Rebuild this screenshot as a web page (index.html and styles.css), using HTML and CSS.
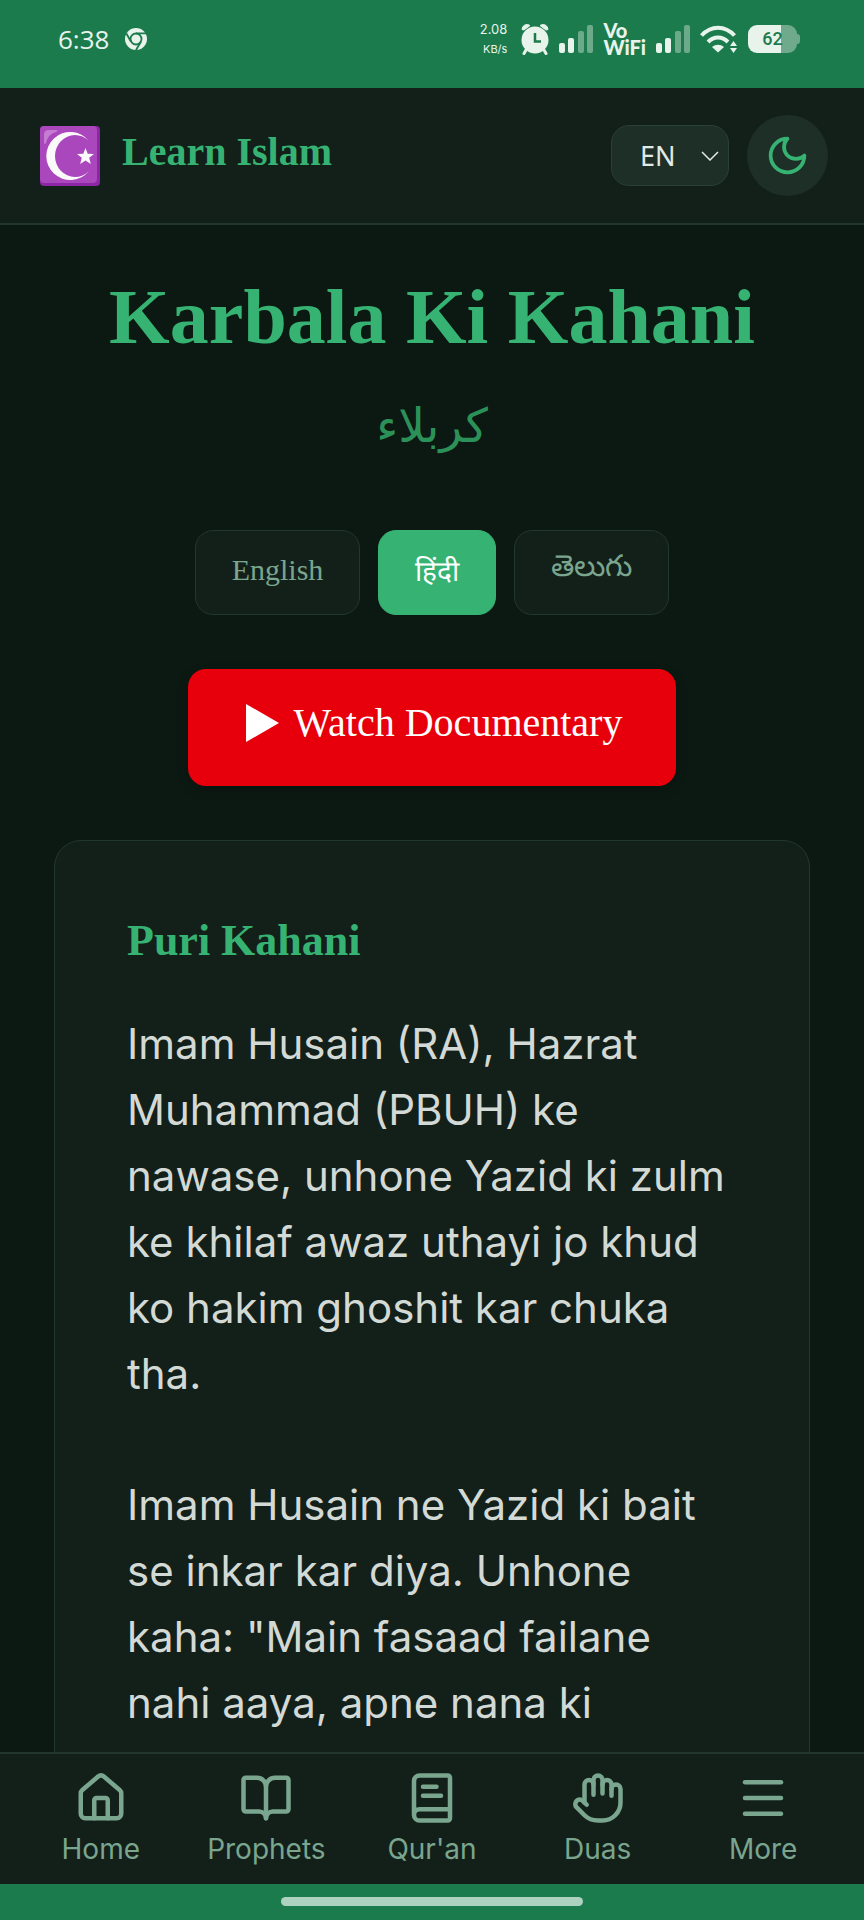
FILE: index.html
```html
<!DOCTYPE html>
<html lang="en">
  <head>
    <meta charset="utf-8" />
    <meta name="viewport" content="width=device-width, initial-scale=1" />
    <title>Karbala Ki Kahani - Learn Islam</title>
    <link rel="stylesheet" href="styles.css" />
  </head>
  <body>
    <div class="status-bar">
      <span class="status-time">6:38</span>
      <svg class="status-chrome" viewBox="0 0 24 24">
        <circle cx="12" cy="12" r="12" fill="#e8f3ec" />
        <circle cx="12" cy="12" r="6" fill="#e8f3ec" stroke="#1c7b4c" stroke-width="2" />
        <path d="M12 5.8h11M6.600 15L1.500 6M17.400 15L12 24" stroke="#1c7b4c" stroke-width="2" />
      </svg>
      <div class="status-right">
        <div class="net-speed"><span>2.08</span><span class="net-unit">KB/s</span></div>
        <svg class="icon-alarm" viewBox="0 0 28 32">
          <g fill="#e8f3ec">
            <circle cx="14" cy="17" r="13.500" />
            <path d="M1 6.500A5 5 0 0 1 9 2.500L3 7z" stroke="#e8f3ec" stroke-linejoin="round" />
            <path d="M27 6.500A5 5 0 0 0 19 2.500L25 7z" stroke="#e8f3ec" stroke-linejoin="round" />
          </g>
          <path d="M5 27l-2 3.500M23 27l2 3.500" stroke="#e8f3ec" stroke-width="3" stroke-linecap="round" />
          <path d="M14 10v8.500h6" fill="none" stroke="#1c7b4c" stroke-width="2.500" />
        </svg>
        <svg class="icon-signal" viewBox="0 0 34 28" fill="#e8f3ec">
          <rect x="0" y="18" width="6" height="10" rx="2" />
          <rect x="9" y="13" width="6" height="15" rx="2" />
          <rect x="19" y="6" width="6" height="22" rx="2" opacity="0.4" />
          <rect x="28" y="0" width="6" height="28" rx="2" opacity="0.4" />
        </svg>
        <div class="vowifi"><span>Vo</span><span>WiFi</span></div>
        <svg class="icon-signal" viewBox="0 0 34 28" fill="#e8f3ec">
          <rect x="0" y="18" width="6" height="10" rx="2" />
          <rect x="9" y="13" width="6" height="15" rx="2" />
          <rect x="19" y="6" width="6" height="22" rx="2" opacity="0.4" />
          <rect x="28" y="0" width="6" height="28" rx="2" opacity="0.4" />
        </svg>
        <svg class="icon-wifi" viewBox="0 0 38 28">
          <g fill="none" stroke="#e8f3ec" stroke-width="4">
            <path d="M1.500 10.500C11 0 25 0 34.500 10.500" />
            <path d="M8 17c6-6 14-6 20 0" />
          </g>
          <path d="M12 22c4-3 8-3 12 0l-6 5.500z" fill="#e8f3ec" />
          <path d="M30 21l3.500-5 3.500 5zM30 23h7l-3.500 5z" fill="#e8f3ec" />
        </svg>
        <div class="battery">62</div>
      </div>
    </div>

    <header class="header">
      <a class="logo" href="#">
        <svg class="logo-icon" viewBox="0 0 60 60">
          <rect width="60" height="60" rx="4" fill="#8b26a5" />
          <rect width="57" height="57" rx="4" fill="#aa47bc" />
          <path d="M4 17V9q0-5 5-5h7q3 0 0 2Q8 8 6 17q-1 2-2 0z" fill="#c57dd2" />
          <path d="M49 15A24 24 0 1 0 49 45A20 21 0 1 1 49 15z" fill="#fafafa" />
          <path d="M45.500 22l2.200 5.700 6.300.3-4.800 3.800 1.600 6.200-5.300-3.500-5.300 3.500 1.600-6.200L37 28l6.300-.3z" fill="#fafafa" />
        </svg>
        <span class="logo-text">Learn Islam</span>
      </a>
      <div class="header-actions">
        <select class="lang-select" aria-label="Language">
          <option>EN</option>
          <option>HI</option>
          <option>TE</option>
        </select>
        <button class="theme-btn" aria-label="Toggle theme">
          <svg viewBox="0 0 24 24"><path d="M12 3a6 6 0 0 0 9 9 9 9 0 1 1-9-9Z" /></svg>
        </button>
      </div>
    </header>

    <main class="content">
      <h1 class="title">Karbala Ki Kahani</h1>
      <p class="arabic" lang="ar" dir="rtl">كربلاء</p>
      <div class="lang-btns">
        <button class="lang-btn">English</button>
        <button class="lang-btn active" lang="hi">हिंदी</button>
        <button class="lang-btn" lang="te">తెలుగు</button>
      </div>
      <a class="watch-btn" href="#">
        <svg viewBox="0 0 33 38"><path d="M0 0l33 19L0 38z" /></svg>
        <span>Watch Documentary</span>
      </a>
      <article class="card">
        <h2 class="card-title">Puri Kahani</h2>
        <p class="story">
          Imam Husain (RA), Hazrat<br />
          Muhammad (PBUH) ke<br />
          nawase, unhone Yazid ki zulm<br />
          ke khilaf awaz uthayi jo khud<br />
          ko hakim ghoshit kar chuka<br />
          tha.
        </p>
        <p class="story">
          Imam Husain ne Yazid ki bait<br />
          se inkar kar diya. Unhone<br />
          kaha: "Main fasaad failane<br />
          nahi aaya, apne nana ki
        </p>
      </article>
    </main>

    <nav class="bottom-nav">
      <a class="nav-item" href="#">
        <svg viewBox="0 0 24 24">
          <path d="M15 21v-8a1 1 0 0 0-1-1h-4a1 1 0 0 0-1 1v8" />
          <path d="M3 10a2 2 0 0 1 .709-1.528l7-5.999a2 2 0 0 1 2.582 0l7 5.999A2 2 0 0 1 21 10v9a2 2 0 0 1-2 2H5a2 2 0 0 1-2-2z" />
        </svg>
        <span>Home</span>
      </a>
      <a class="nav-item" href="#">
        <svg viewBox="0 0 24 24">
          <path d="M12 7v14" />
          <path d="M3 18a1 1 0 0 1-1-1V4a1 1 0 0 1 1-1h5a4 4 0 0 1 4 4 4 4 0 0 1 4-4h5a1 1 0 0 1 1 1v13a1 1 0 0 1-1 1h-6a3 3 0 0 0-3 3 3 3 0 0 0-3-3z" />
        </svg>
        <span>Prophets</span>
      </a>
      <a class="nav-item" href="#">
        <svg viewBox="0 0 24 24">
          <path d="M4 19.500v-15A2.500 2.500 0 0 1 6.500 2H19a1 1 0 0 1 1 1v18a1 1 0 0 1-1 1H6.500a1 1 0 0 1 0-5H20" />
          <path d="M8 11h8" />
          <path d="M8 7h6" />
        </svg>
        <span>Qur'an</span>
      </a>
      <a class="nav-item" href="#">
        <svg viewBox="0 0 24 24">
          <path d="M18 11V6a2 2 0 0 0-2-2a2 2 0 0 0-2 2" />
          <path d="M14 10V4a2 2 0 0 0-2-2a2 2 0 0 0-2 2v2" />
          <path d="M10 10.500V6a2 2 0 0 0-2-2a2 2 0 0 0-2 2v8" />
          <path d="M18 8a2 2 0 1 1 4 0v6a8 8 0 0 1-8 8h-2c-2.800 0-4.500-.86-5.990-2.340l-3.600-3.600a2 2 0 0 1 2.830-2.820L7 15" />
        </svg>
        <span>Duas</span>
      </a>
      <a class="nav-item" href="#">
        <svg viewBox="0 0 24 24">
          <path d="M4 5h16" />
          <path d="M4 12h16" />
          <path d="M4 19h16" />
        </svg>
        <span>More</span>
      </a>
    </nav>
    <div class="gesture-bar"><div class="gesture-pill"></div></div>
  </body>
</html>
```
FILE: styles.css
```css
* {
  box-sizing: border-box;
}
body {
  margin: 0;
  height: 100vh;
  display: flex;
  flex-direction: column;
  background-color: #0c1812;
  color: #d3dad6;
  font-family: Inter, "Noto Sans", sans-serif;
}
a {
  color: inherit;
  text-decoration: none;
}
h1,
h2,
p {
  margin: 0;
}

/* status bar */
.status-bar {
  flex: none;
  height: 88px;
  padding: 0 67px 11px 58px;
  display: flex;
  align-items: center;
  gap: 16px;
  background-color: #1c7b4c;
  color: #e8f3ec;
}
.status-time {
  font-family: "Open Sans", sans-serif;
  font-size: 26px;
}
.status-chrome {
  width: 22px;
  height: 22px;
}
.status-right {
  margin-left: auto;
  display: flex;
  align-items: center;
  gap: 10px;
}
.net-speed {
  margin-right: 4px;
  display: flex;
  flex-direction: column;
  gap: 4px;
  font-size: 13px;
  line-height: 16px;
  text-align: right;
}
.net-unit {
  font-size: 11px;
}
.icon-alarm {
  width: 28px;
  height: 32px;
}
.icon-signal {
  width: 34px;
  height: 28px;
}
.vowifi {
  display: flex;
  flex-direction: column;
  font-family: Lato, sans-serif;
  font-size: 20px;
  font-weight: 900;
  line-height: 17px;
}
.icon-wifi {
  width: 38px;
  height: 28px;
}
.battery {
  position: relative;
  width: 49px;
  height: 28px;
  border-radius: 9px;
  background: linear-gradient(to right, #e8f3ec 67%, #6eaa8b 67%);
  color: #1c7b4c;
  font-family: Roboto, sans-serif;
  font-size: 18px;
  font-weight: 500;
  line-height: 28px;
  text-align: center;
}
.battery::after {
  content: "";
  position: absolute;
  left: 100%;
  top: 9px;
  width: 3px;
  height: 10px;
  border-radius: 0 3px 3px 0;
  background-color: #6eaa8b;
}

/* header */
.header {
  flex: none;
  height: 137px;
  padding: 0 36px 0 40px;
  display: flex;
  align-items: center;
  justify-content: space-between;
  background-color: #13201a;
  border-bottom: 2px solid #22362d;
}
.logo {
  display: flex;
  align-items: center;
  gap: 22px;
  color: #36b372;
  font-family: "Liberation Serif", serif;
  font-size: 40px;
  font-weight: 700;
}
.logo-icon {
  width: 60px;
  height: 60px;
}
.logo-text {
  padding-bottom: 8px;
}
.header-actions {
  display: flex;
  align-items: center;
  gap: 18px;
}
.lang-select {
  appearance: none;
  width: 118px;
  height: 61px;
  padding: 0 0 0 28px;
  border: 1px solid #294036;
  border-radius: 18px;
  background: #1d2f26 url("data:image/svg+xml,%3Csvg xmlns='http://www.w3.org/2000/svg' viewBox='0 0 18 10'%3E%3Cpath d='M1 1l8 8 8-8' fill='none' stroke='%23e3e9e5' stroke-width='1.500'/%3E%3C/svg%3E") no-repeat right 9px center / 18px 10px;
  color: #e3e9e5;
  font-family: "Noto Sans", sans-serif;
  font-size: 27px;
}
.theme-btn {
  width: 81px;
  height: 81px;
  padding: 18px;
  border: none;
  border-radius: 50%;
  background-color: #1d2f26;
  color: #36b372;
}
.theme-btn svg {
  display: block;
  width: 45px;
  height: 45px;
}
.theme-btn svg,
.nav-item svg {
  fill: none;
  stroke: currentColor;
  stroke-width: 2;
  stroke-linecap: round;
  stroke-linejoin: round;
}

/* page content */
.content {
  flex: 1;
  min-height: 0;
  overflow-y: auto;
  scrollbar-width: none;
  padding: 34px 54px 0;
  display: flex;
  flex-direction: column;
  align-items: center;
}
.title {
  color: #36b372;
  font-family: "Liberation Serif", serif;
  font-size: 78px;
  font-weight: 700;
  line-height: 116px;
}
.arabic {
  margin-top: 6px;
  color: #2c9159;
  font-family: "DejaVu Sans", serif;
  font-size: 47px;
  line-height: 90px;
}
.lang-btns {
  margin-top: 59px;
  display: flex;
  gap: 18px;
}
.lang-btn {
  height: 85px;
  padding: 0 36px 6px;
  border: 1px solid #22382e;
  border-radius: 18px;
  background-color: #13201a;
  color: #7aa58e;
  font-family: "Liberation Serif", serif;
  font-size: 30px;
}
.lang-btn.active {
  border-color: #36b372;
  background-color: #36b372;
  color: #fff;
  font-size: 28px;
}
.watch-btn {
  flex: none;
  margin-top: 54px;
  height: 117px;
  padding: 0 54px 10px 58px;
  display: flex;
  align-items: center;
  gap: 15px;
  border-radius: 18px;
  background-color: #e7000b;
  box-shadow: 0 4px 12px rgba(0, 0, 0, 0.15);
  color: #fff;
  font-family: "Liberation Serif", serif;
  font-size: 40px;
}
.watch-btn svg {
  width: 33px;
  height: 38px;
  fill: #fff;
}
.card {
  flex: none;
  align-self: stretch;
  margin-top: 54px;
  padding: 72px;
  border: 1px solid #22382e;
  border-radius: 27px;
  background-color: #13201a;
}
.card-title {
  color: #36b372;
  font-family: "Liberation Serif", serif;
  font-size: 44px;
  line-height: 56px;
}
.story {
  margin-top: 42px;
  font-size: 42px;
  line-height: 66px;
  white-space: nowrap;
}
.story + .story {
  margin-top: 65px;
}

/* bottom navigation */
.bottom-nav {
  flex: none;
  height: 132px;
  padding: 17px 18px 0;
  display: grid;
  grid-template-columns: repeat(5, 1fr);
  background-color: #13201a;
  border-top: 2px solid #22362d;
}
.nav-item {
  display: flex;
  flex-direction: column;
  align-items: center;
  gap: 4px;
  color: #7aa58e;
  font-size: 28px;
  line-height: 40px;
}
.nav-item svg {
  width: 54px;
  height: 54px;
}
.gesture-bar {
  flex: none;
  height: 36px;
  padding-bottom: 2px;
  display: flex;
  align-items: center;
  justify-content: center;
  background-color: #1c7b4c;
}
.gesture-pill {
  width: 35%;
  height: 9px;
  border-radius: 5px;
  background-color: #aed2c0;
}
```
